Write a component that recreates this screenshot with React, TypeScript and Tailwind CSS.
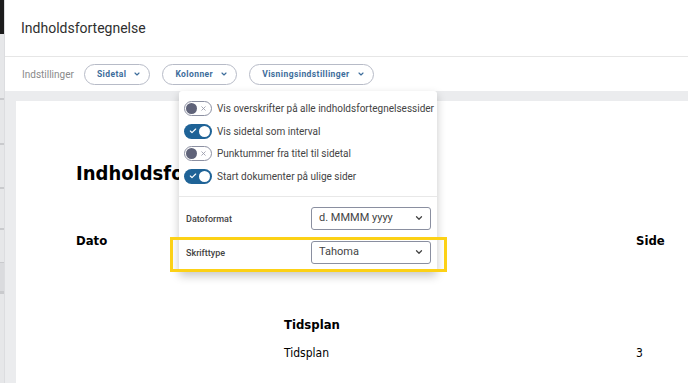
import { ChevronDown, Check, X } from 'lucide-react';

const toggles = [
  { label: 'Vis overskrifter på alle indholdsfortegnelsessider', on: false },
  { label: 'Vis sidetal som interval', on: true },
  { label: 'Punktummer fra titel til sidetal', on: false },
  { label: 'Start dokumenter på ulige sider', on: true },
];

const pills = ['Sidetal', 'Kolonner', 'Visningsindstillinger'];

function Toggle({ on }: { on: boolean }) {
  if (on) {
    return (
      <div className="w-[28px] h-[15px] rounded-full bg-[#1f6397] flex items-center justify-between pl-[5px] pr-[2px] shrink-0">
        <Check className="w-[8px] h-[8px] text-white" strokeWidth={3.5} />
        <div className="w-[11px] h-[11px] rounded-full bg-white" />
      </div>
    );
  }
  return (
    <div className="w-[28px] h-[15px] rounded-full bg-white border border-[#8c90a2] flex items-center justify-between pl-[1px] pr-[4px] shrink-0">
      <div className="w-[11px] h-[11px] rounded-full bg-[#5f6379]" />
      <X className="w-[7px] h-[7px] text-[#9a9dab]" strokeWidth={3} />
    </div>
  );
}

function Select({ value }: { value: string }) {
  return (
    <div className="w-[120px] h-[23px] rounded-[3px] border border-[#8a8fa0] flex items-center justify-between pl-[7px] pr-[6px] text-[11px] text-[#444]">
      <span>{value}</span>
      <ChevronDown className="w-[10px] h-[10px] text-[#444]" strokeWidth={3} />
    </div>
  );
}

export default function App() {
  return (
    <div className="relative w-[688px] h-[383px] overflow-hidden flex bg-white font-['Roboto',sans-serif]">
      {/* left edge of the app behind */}
      <div className="w-[5px] shrink-0 flex flex-col bg-[#e6e7e9] border-r border-[#dcdde0]">
        <div className="h-[34px] bg-[#1c1c1c]" />
        <div className="h-[64px]" />
        <div className="h-[2px] bg-[#c9cacd]" />
        <div className="h-[43px]" />
        <div className="h-[2px] bg-[#c9cacd]" />
        <div className="h-[42px]" />
        <div className="h-[2px] bg-[#c9cacd]" />
        <div className="h-[39px]" />
        <div className="h-[2px] bg-[#c9cacd]" />
        <div className="h-[32px]" />
        <div className="h-[30px] bg-[#dadbde] border-y border-[#c9cacd]" />
        <div className="h-[2px] bg-[#c9cacd]" />
      </div>

      <div className="flex-1 min-w-0 flex flex-col">
        {/* header */}
        <div className="h-[57px] shrink-0 border-b border-[#e6e6e6] flex items-center pl-[16px] text-[14px] text-[#2f2f2f]">
          Indholdsfortegnelse
        </div>

        {/* toolbar */}
        <div className="h-[34px] shrink-0 flex items-center pl-[17px] gap-[12px]">
          <span className="text-[10px] text-[#8a8a8a] mr-[-2px]">Indstillinger</span>
          {pills.map((p) => (
            <div
              key={p}
              className="h-[21px] rounded-full border border-[#b7bbc7] flex items-center pl-[12px] pr-[8px] gap-[7px] text-[8.5px] font-bold tracking-[0.05em] text-[#3d6d9b]"
            >
              <span>{p}</span>
              <ChevronDown className="w-[8px] h-[8px]" strokeWidth={3.5} />
            </div>
          ))}
        </div>

        {/* document area */}
        <div className="flex-1 bg-[#ebecee] pl-[11px] pt-[10px] overflow-hidden">
          <div className="w-[720px] h-[400px] bg-white pl-[60px] pt-[60px] font-['DejaVu_Sans_Condensed','DejaVu_Sans',sans-serif] text-black">
            <div className="text-[20px] leading-[24px] font-bold">Indholdsfortegnelse</div>
            <div className="mt-[48px] grid grid-cols-[560px_auto] text-[13px] leading-[16px] font-bold">
              <span>Dato</span>
              <span>Side</span>
            </div>
            <div className="mt-[68px] pl-[208px] text-[13px] leading-[16px] font-bold">Tidsplan</div>
            <div className="mt-[12px] pl-[208px] grid grid-cols-[352px_auto] text-[12px] leading-[16px]">
              <span>Tidsplan</span>
              <span>3</span>
            </div>
          </div>
        </div>
      </div>

      {/* dropdown menu */}
      <div className="absolute left-[179px] top-[91px] w-[258px] h-[181px] bg-white rounded-[3px] shadow-[0_4px_10px_rgba(0,0,0,0.22)] flex flex-col">
        <div className="flex flex-col gap-[7.5px] pt-[10px] px-[5px] pb-[12px]">
          {toggles.map((t) => (
            <div key={t.label} className="flex items-center gap-[5px] h-[15px] text-[10px] text-[#444] whitespace-nowrap">
              <Toggle on={t.on} />
              <span>{t.label}</span>
            </div>
          ))}
        </div>
        <div className="h-px bg-[#e8e8e8]" />
        <div className="flex flex-col gap-[11px] pt-[10px] pl-[7px] pr-[6px]">
          <div className="flex items-center justify-between">
            <span className="text-[9px] font-medium text-[#444] mt-[3px]">Datoformat</span>
            <Select value="d. MMMM yyyy" />
          </div>
          <div className="flex items-center justify-between">
            <span className="text-[9px] font-medium text-[#444] mt-[3px]">Skrifttype</span>
            <Select value="Tahoma" />
          </div>
        </div>
      </div>

      {/* highlight annotation */}
      <div className="absolute left-[170px] top-[237px] w-[277px] h-[35px] border-[3px] border-[#fcd116]" />
    </div>
  );
}
